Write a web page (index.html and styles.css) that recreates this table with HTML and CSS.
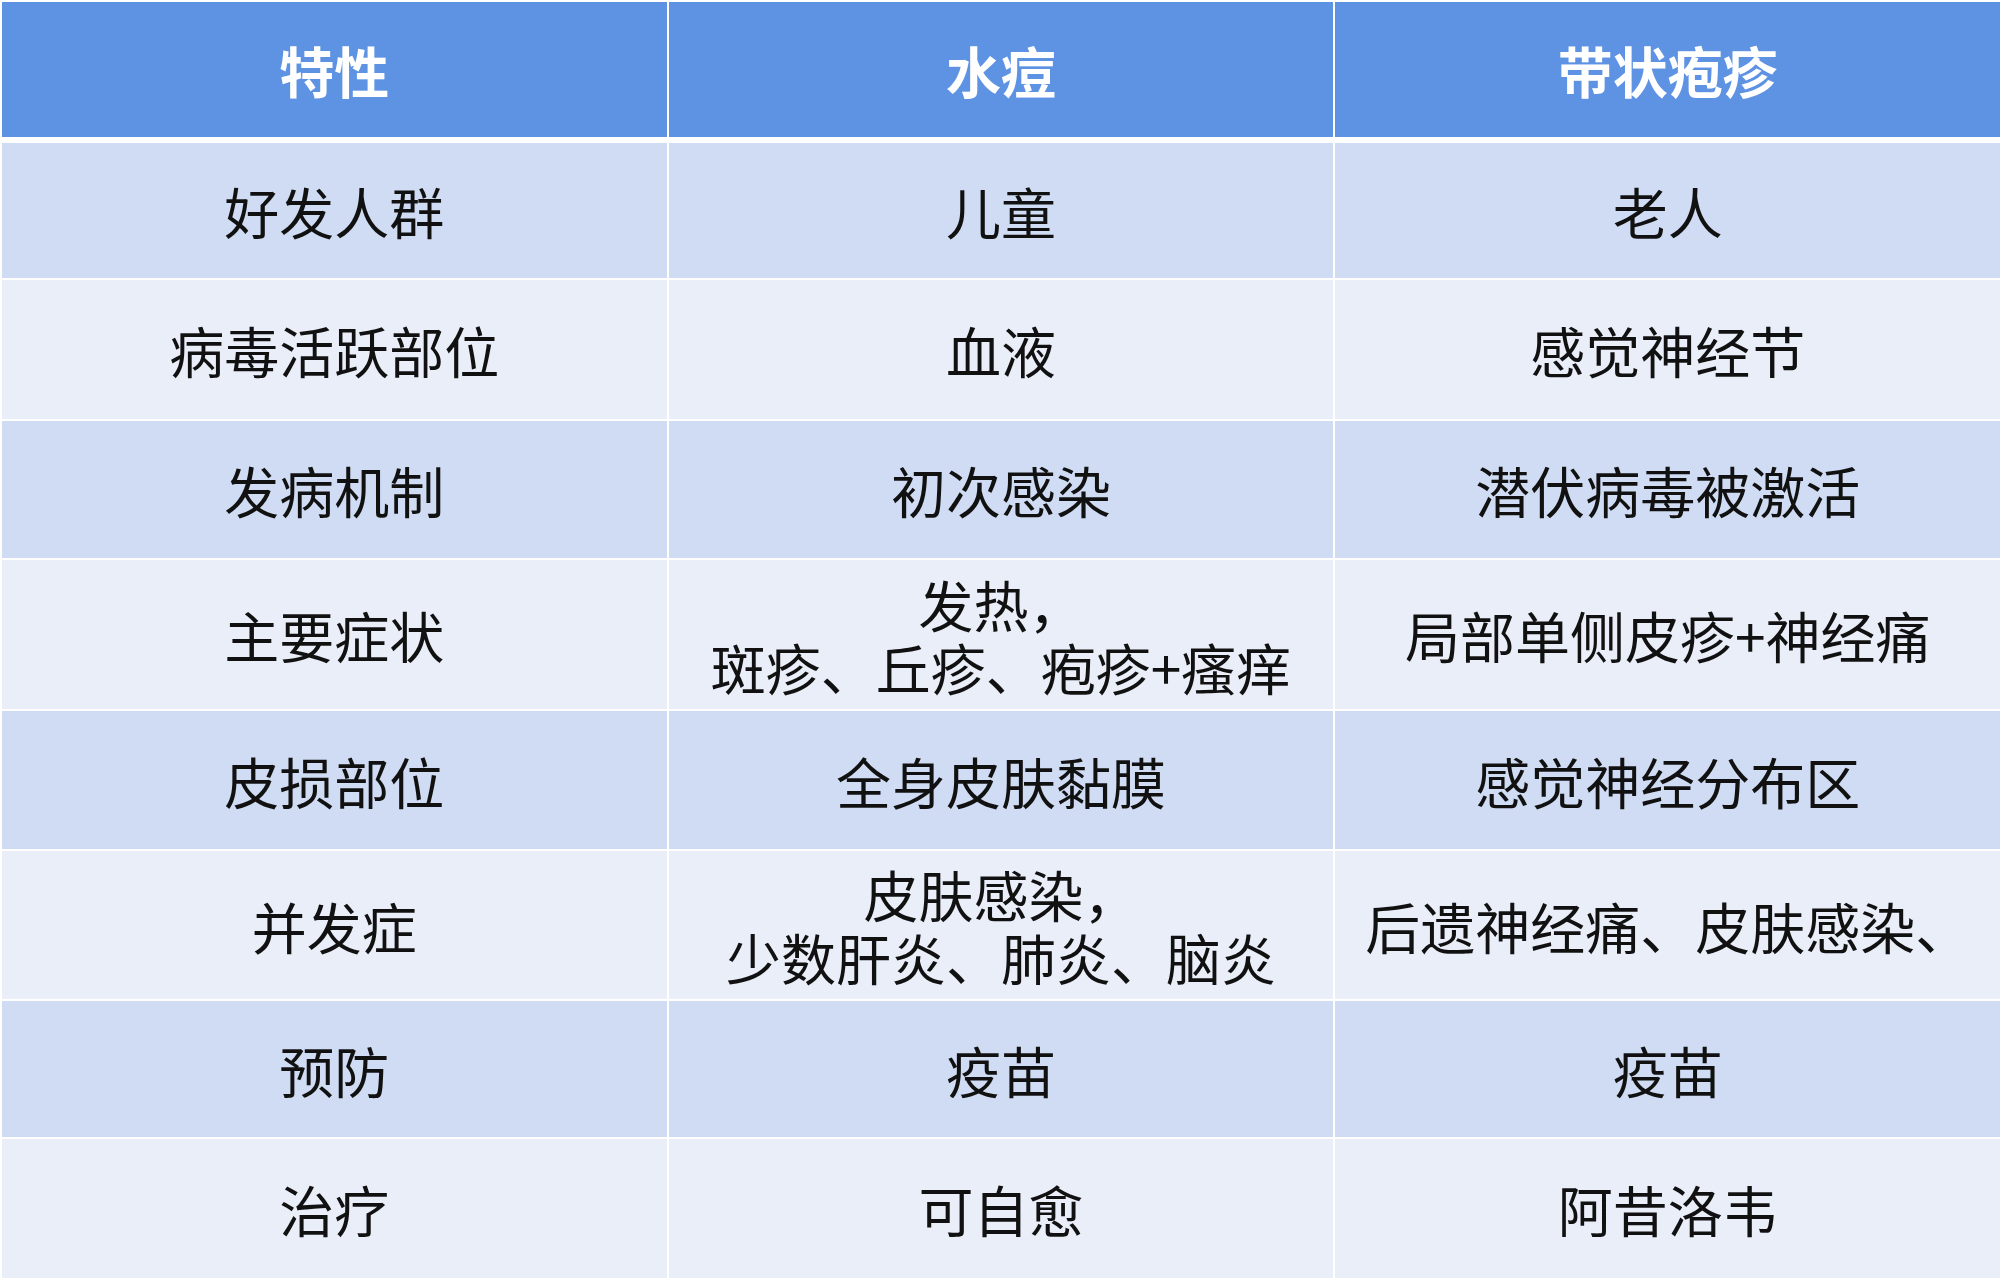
FILE: index.html
```html
<!DOCTYPE html>
<html lang="zh-CN">
<head>
<meta charset="utf-8">
<title>水痘与带状疱疹对比</title>
<link rel="stylesheet" href="styles.css">
</head>
<body>
<div class="table">
  <div class="cell head">特性</div>
  <div class="cell head">水痘</div>
  <div class="cell head">带状疱疹</div>

  <div class="cell dark">好发人群</div>
  <div class="cell dark">儿童</div>
  <div class="cell dark">老人</div>

  <div class="cell light">病毒活跃部位</div>
  <div class="cell light">血液</div>
  <div class="cell light">感觉神经节</div>

  <div class="cell dark">发病机制</div>
  <div class="cell dark">初次感染</div>
  <div class="cell dark">潜伏病毒被激活</div>

  <div class="cell light">主要症状</div>
  <div class="cell light">发热，<br>斑疹、丘疹、疱疹+瘙痒</div>
  <div class="cell light">局部单侧皮疹+神经痛</div>

  <div class="cell dark">皮损部位</div>
  <div class="cell dark">全身皮肤黏膜</div>
  <div class="cell dark">感觉神经分布区</div>

  <div class="cell light">并发症</div>
  <div class="cell light">皮肤感染，<br>少数肝炎、肺炎、脑炎</div>
  <div class="cell light">后遗神经痛、皮肤感染、</div>

  <div class="cell dark">预防</div>
  <div class="cell dark">疫苗</div>
  <div class="cell dark">疫苗</div>

  <div class="cell light">治疗</div>
  <div class="cell light">可自愈</div>
  <div class="cell light">阿昔洛韦</div>
</div>
</body>
</html>
```

FILE: styles.css
```css
* {
  box-sizing: border-box;
}

html, body {
  margin: 0;
  padding: 0;
  background: #ffffff;
}

body {
  width: 2002px;
  height: 1280px;
  overflow: hidden;
  font-family: "Noto Sans CJK SC", "Microsoft YaHei", sans-serif;
}

.table {
  display: grid;
  grid-template-columns: repeat(3, 1fr);
  grid-template-rows: 139px 135px 139px 137px 149px 138px 148px 136px 139px;
  gap: 2px;
  padding: 2px;
  width: 2002px;
  height: 1280px;
  background: #ffffff;
}

.cell {
  display: flex;
  align-items: center;
  justify-content: center;
  text-align: center;
  font-size: 55px;
  line-height: 63px;
  color: #111111;
  white-space: nowrap;
}

.head {
  margin-bottom: 4px;
  background: #5e93e3;
  color: #ffffff;
  font-weight: 700;
}

.dark {
  background: #cfdcf3;
}

.light {
  background: #e9eef9;
}
```
